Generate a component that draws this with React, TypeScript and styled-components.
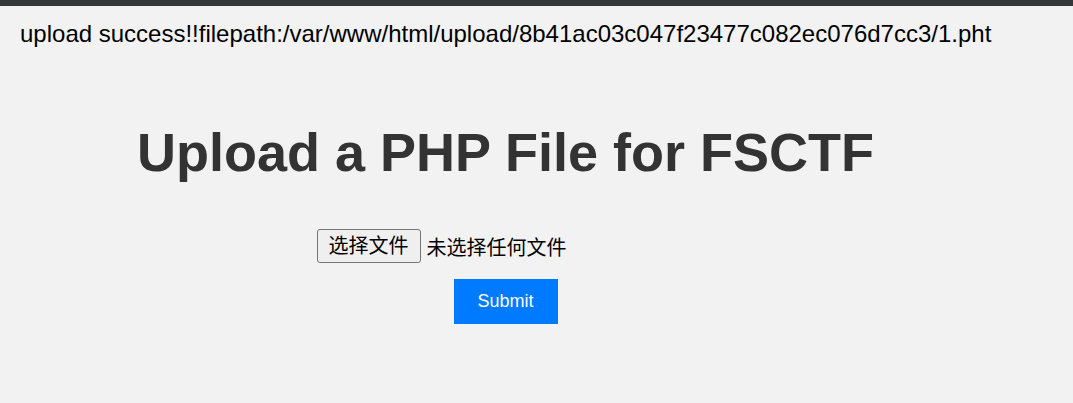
import styled, {createGlobalStyle} from 'styled-components'

const GlobalStyle = createGlobalStyle`
  html, body {
    margin: 0;
    padding: 0;
    background: #f2f2f2;
    font-family: "Liberation Sans", Arial, sans-serif;
  }
`

const TopBar = styled.div`
  height: 6px;
  background: #35363a;
`

const Status = styled.div`
  padding: 14px 0 0 20px;
  font-size: 24px;
  line-height: 28px;
  color: #000;
`

const Main = styled.div`
  width: 1011px;
  padding-top: 73px;
`

const Title = styled.h1`
  margin: 0;
  text-align: center;
  font-size: 54px;
  line-height: 62px;
  font-weight: bold;
  color: #333;
`

const Form = styled.form`
  display: flex;
  flex-direction: column;
  align-items: center;
  gap: 16px;
  padding-top: 46px;
`

const FileRow = styled.div`
  display: flex;
  align-items: center;
  gap: 6px;
  margin-right: 128px;
  font-family: "Liberation Sans", "Noto Sans CJK SC", sans-serif;
  font-size: 20px;
  color: #000;
`

const PickButton = styled.button`
  height: 34px;
  padding: 0 11px;
  font: inherit;
  line-height: 30px;
  color: #000;
  background: #efefef;
  border: 1px solid #767676;
  border-radius: 3px;
`

const SubmitButton = styled.button`
  width: 104px;
  height: 45px;
  border: none;
  background: #007bff;
  color: #fff;
  font-family: "Liberation Sans", Arial, sans-serif;
  font-size: 18px;
`

export default function App() {
  return (
    <>
      <GlobalStyle />
      <TopBar />
      <Status>
        upload success!!filepath:/var/www/html/upload/8b41ac03c047f23477c082ec076d7cc3/1.pht
      </Status>
      <Main>
        <Title>Upload a PHP File for FSCTF</Title>
        <Form onSubmit={e => e.preventDefault()}>
          <FileRow>
            <PickButton type="button">选择文件</PickButton>
            <span>未选择任何文件</span>
          </FileRow>
          <SubmitButton type="submit">Submit</SubmitButton>
        </Form>
      </Main>
    </>
  )
}
